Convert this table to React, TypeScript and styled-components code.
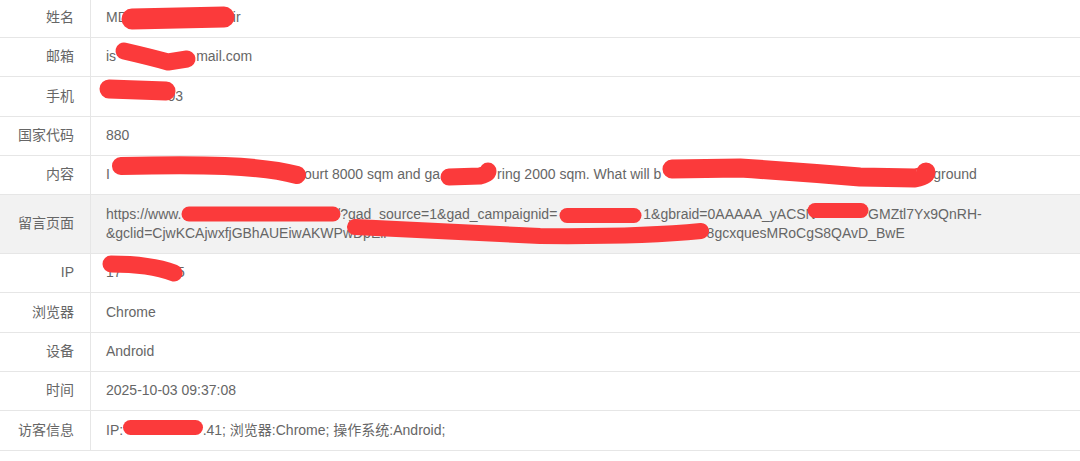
import React, { FC } from 'react';
import styled, { createGlobalStyle } from 'styled-components';

const GlobalStyle = createGlobalStyle`
  html, body {
    margin: 0;
    padding: 0;
    background: #fff;
    overflow: hidden;
  }
  body {
    font-family: 'Liberation Sans', 'Noto Sans CJK SC', Arial, sans-serif;
  }
`;

const Page = styled.div`
  position: relative;
  width: 1080px;
  height: 461px;
  overflow: hidden;
`;

const Table = styled.div`
  margin-top: -1.2px;
  display: flex;
  flex-direction: column;
`;

const Row = styled.div<{ $active?: boolean }>`
  display: grid;
  grid-template-columns: 91px 1fr;
  border-bottom: 1px solid #e6e6e6;
  background-color: ${({ $active }) => ($active ? '#f2f2f2' : '#fff')};
`;

const Label = styled.div`
  border-right: 1px solid #e6e6e6;
  padding: 9.35px 16px 9.35px 0;
  text-align: right;
  font-size: 14px;
  line-height: 19.6px;
  color: #666;
  white-space: nowrap;
  display: flex;
  align-items: center;
  justify-content: flex-end;
`;

const Value = styled.div`
  padding: 9.35px 15px;
  font-size: 14px;
  line-height: 19.6px;
  color: #666;
  white-space: nowrap;
`;

// blank space where the original text was scribbled out
const Redact = styled.span<{ $w: number }>`
  display: inline-block;
  width: ${({ $w }) => $w}px;
  height: 1px;
`;

const Footer = styled.div`
  margin-top: 10px;
  border-top: 1px solid #e6e6e6;
  height: 20px;
`;

const Scribbles = styled.svg`
  position: absolute;
  left: 0;
  top: 0;
  pointer-events: none;

  path {
    fill: none;
    stroke: #fb3a3b;
    stroke-linecap: round;
    stroke-linejoin: round;
  }
`;

interface Field {
  label: string;
  value: React.ReactNode;
  active?: boolean;
}

const fields: Field[] = [
  { label: '姓名', value: <>MD<Redact $w={105} />ir</> },
  { label: '邮箱', value: <>is<Redact $w={80} />mail.com</> },
  { label: '手机', value: <><Redact $w={61.4} />03</> },
  { label: '国家代码', value: '880' },
  {
    label: '内容',
    value: (
      <>
        I<Redact $w={194} />ourt 8000 sqm and ga<Redact $w={57} />ring 2000 sqm. What will b
        <Redact $w={272} />ground
      </>
    ),
  },
  {
    label: '留言页面',
    active: true,
    value: (
      <>
        https://www.<Redact $w={154.8} />/?gad_source=1&amp;gad_campaignid=<Redact $w={86} />
        1&amp;gbraid=0AAAAA_yACSN<Redact $w={52.4} />GMZtl7Yx9QnRH-
        <br />
        &amp;gclid=CjwKCAjwxfjGBhAUEiwAKWPwDpEir<Redact $w={318.6} />8gcxquesMRoCgS8QAvD_BwE
      </>
    ),
  },
  { label: 'IP', value: <>17<Redact $w={55.4} />5</> },
  { label: '浏览器', value: 'Chrome' },
  { label: '设备', value: 'Android' },
  { label: '时间', value: '2025-10-03 09:37:08' },
  {
    label: '访客信息',
    value: <>IP:<Redact $w={79.5} />.41; 浏览器:Chrome; 操作系统:Android;</>,
  },
];

const strokes: { d: string; w: number }[] = [
  { d: 'M132 19 L224 17', w: 21 },
  { d: 'M124 51 Q150 57 168 62 L187 59', w: 17 },
  { d: 'M109 89 L166 91', w: 19 },
  { d: 'M121 166 C200 164 260 165 297 175', w: 18 },
  { d: 'M449 177 L480 176 Q488 174 488 171', w: 17 },
  { d: 'M672 169 L740 168 Q800 172 860 177 L915 178 Q926 176 926 172', w: 19 },
  { d: 'M189 214 L333 214', w: 15 },
  { d: 'M567 215.5 L634 215.5', w: 15 },
  { d: 'M815 210.5 L861 210.5', w: 15 },
  { d: 'M355 227 Q450 232 540 236 Q640 237 701 231', w: 16 },
  { d: 'M111 264 Q150 264 174 273', w: 17 },
  { d: 'M130.5 427.5 L195.5 427.5', w: 15 },
];

const App: FC = () => {
  return (
    <Page>
      <GlobalStyle />
      <Table>
        {fields.map((f, i) => (
          <Row key={i} $active={f.active}>
            <Label>{f.label}</Label>
            <Value>{f.value}</Value>
          </Row>
        ))}
      </Table>
      <Footer />
      <Scribbles width="1080" height="461" viewBox="0 0 1080 461">
        {strokes.map((s, i) => (
          <path key={i} d={s.d} strokeWidth={s.w} />
        ))}
      </Scribbles>
    </Page>
  );
};

export default App;
